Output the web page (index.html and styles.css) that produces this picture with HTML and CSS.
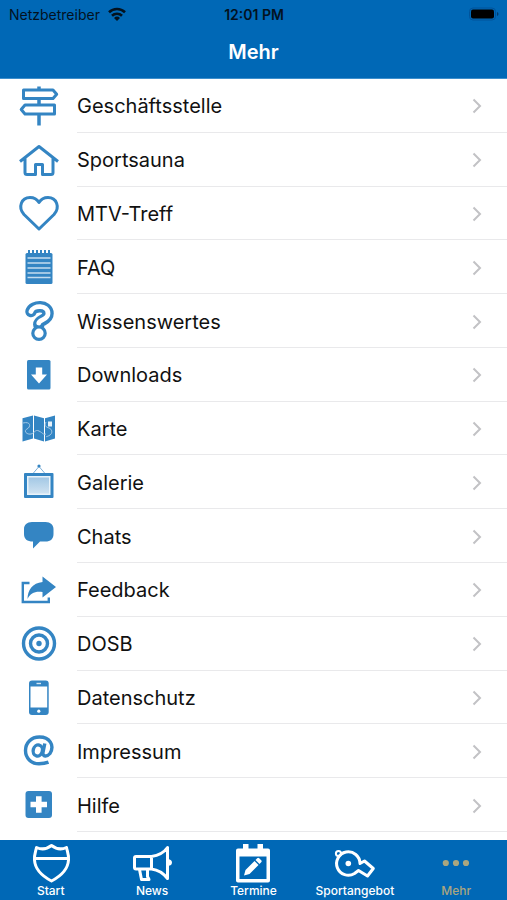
FILE: index.html
```html
<!DOCTYPE html>
<html lang="de">
<head>
<meta charset="utf-8">
<meta name="viewport" content="width=device-width, initial-scale=1">
<title>Mehr</title>
<link rel="stylesheet" href="styles.css">
</head>
<body>
<svg class="defs" aria-hidden="true">
  <symbol id="chevron" viewBox="0 0 10 16"><path d="M1.5 1.5 8 8 1.5 14.5" fill="none" stroke="currentColor" stroke-width="2"/></symbol>
  <linearGradient id="glass" x1="0" y1="0" x2="0" y2="1"><stop offset="0" stop-color="#a3c8e5"/><stop offset="1" stop-color="#cfe2f1"/></linearGradient>
</svg>
<header class="top">
  <div class="status">
    <span class="carrier">Netzbetreiber
      <svg class="wifi" viewBox="0 0 18 14" aria-hidden="true"><g fill="none" stroke="currentColor" stroke-width="2.6"><path d="M1 5.2a11.5 11.5 0 0 1 16 0"/><path d="M4 8.7a7.2 7.2 0 0 1 10 0"/></g><path d="M6 10.9a4.4 4.4 0 0 1 6 0L9 14z" fill="currentColor"/></svg>
    </span>
    <span class="time">12:01 PM</span>
    <svg class="battery" viewBox="0 0 30 14" aria-hidden="true"><rect x=".5" y="1" width="26" height="12" rx="3.5" fill="none" stroke="#00539a"/><rect x="2" y="2.500" width="23" height="9" rx="2" fill="currentColor"/><path d="M28 5v4q1.500-.5 1.500-2T28 5" fill="#003b70"/></svg>
  </div>
  <h1 class="title">Mehr</h1>
</header>
<main class="list">
  <a class="row" href="#geschaeftsstelle">
    <svg class="icon" viewBox="0 0 40 40"><g class="line"><path d="M20 .5V4M20 13v5M20 28.500v11" stroke-width="3.500"/><path d="M4.500 4H34l3.700 4.200-3.700 4.300H4.500zM35.500 19H6l-3.800 4.500L6 28h29.500z"/></g></svg>
    <span class="label">Geschäftsstelle<svg class="chev"><use href="#chevron"/></svg></span>
  </a>
  <a class="row" href="#sportsauna">
    <svg class="icon" viewBox="0 0 40 40"><g class="line"><path d="M1 21.500 20 6.500l19 15M6 18v14.500q0 2 2 2h8.500V24.500h7v10H32q2 0 2-2V18"/></g></svg>
    <span class="label">Sportsauna<svg class="chev"><use href="#chevron"/></svg></span>
  </a>
  <a class="row" href="#treff">
    <svg class="icon" viewBox="0 0 40 40"><path class="line" d="M20 36 5 21.500C-1.500 14 2.500 4.500 11 4.500c4.500 0 7.500 2.500 9 5 1.500-2.500 4.500-5 9-5 8.500 0 12.500 9.500 6 17z"/></svg>
    <span class="label">MTV-Treff<svg class="chev"><use href="#chevron"/></svg></span>
  </a>
  <a class="row" href="#faq">
    <svg class="icon" viewBox="0 0 40 40"><rect class="fill" x="6.500" y="6" width="27" height="31" rx="1.500"/><path class="line thin" d="M10 3v4M14 3v4M18 3v4M22 3v4M26 3v4M30 3v4"/><path d="M8.500 11h23M8.500 16h23M8.500 21h23M8.500 26h23M8.500 30.500h23" stroke="#c3dcef" stroke-width="1.600"/></svg>
    <span class="label">FAQ<svg class="chev"><use href="#chevron"/></svg></span>
  </a>
  <a class="row" href="#wissenswertes">
    <svg class="icon" viewBox="0 0 40 40"><g fill="none" stroke-linecap="round"><path d="M12 10.500C14 4 29 3.500 29 12.500c0 7-9.200 6-9.200 11" stroke="currentColor" stroke-width="11.500"/><circle cx="20" cy="32.200" r="6.200" fill="#fff" stroke="currentColor" stroke-width="3.200"/><path d="M12 10.500C14 4 29 3.500 29 12.500c0 6.500-8.500 6-9.200 9.500" stroke="#fff" stroke-width="4.800"/></g></svg>
    <span class="label">Wissenswertes<svg class="chev"><use href="#chevron"/></svg></span>
  </a>
  <a class="row" href="#downloads">
    <svg class="icon" viewBox="0 0 40 40"><rect class="fill" x="8" y="5" width="23.500" height="29.500" rx="1.500"/><path fill="#fff" d="M16.800 12.500h6.400v7H28l-8 9-8-9h4.800z"/></svg>
    <span class="label">Downloads<svg class="chev"><use href="#chevron"/></svg></span>
  </a>
  <a class="row" href="#karte">
    <svg class="icon" viewBox="0 0 40 40"><path class="fill" d="M3.500 9.200 14 6.500v23L3.500 32.500zM15 6.500l10 2.700v23.300l-10-3zM26 9.200l10-2.700v23L26 32.500z"/><path d="M4 14c8-2 8 4 4 6s0 6 4 5 4-5 8-3 4 4 7 3M27 13c-2 4 0 5 3 6s4 5 1 7-3 1-4 2" fill="none" stroke="#a3c8e5"/><rect x="29" y="12.500" width="4" height="5" fill="#e6f1f9"/></svg>
    <span class="label">Karte<svg class="chev"><use href="#chevron"/></svg></span>
  </a>
  <a class="row" href="#galerie">
    <svg class="icon" viewBox="0 0 40 40"><path d="M14 11.500 20 4.500l6 7" fill="none" stroke="#7fb1d9"/><circle class="fill" cx="20" cy="4" r="1.600"/><rect class="fill" x="5" y="11" width="29.500" height="25" rx="1"/><rect x="8" y="14" width="23.500" height="19" fill="#e9f3fa"/><rect x="9.500" y="15.500" width="20.500" height="16" fill="url(#glass)"/></svg>
    <span class="label">Galerie<svg class="chev"><use href="#chevron"/></svg></span>
  </a>
  <a class="row" href="#chats">
    <svg class="icon" viewBox="0 0 40 40"><path class="fill" d="M13 6h13.500c5 0 8 3 8 7v5c0 5-3 7.500-8 7.500H21L14 32.500v-7C8 25.500 5 23 5 18v-5c0-4 3-7 8-7z"/></svg>
    <span class="label">Chats<svg class="chev"><use href="#chevron"/></svg></span>
  </a>
  <a class="row" href="#feedback">
    <svg class="icon" viewBox="0 0 40 40"><path d="M10.500 13H3.800v19h26v-4.500" fill="none" stroke="currentColor" stroke-width="2.400"/><path class="fill" d="M23.500 6.500 37 17 23.500 27.500V22C16 21 11.500 23 8.500 29c0-9 5-16 15-17z"/></svg>
    <span class="label">Feedback<svg class="chev"><use href="#chevron"/></svg></span>
  </a>
  <a class="row" href="#dosb">
    <svg class="icon" viewBox="0 0 40 40"><g fill="none" stroke="currentColor" stroke-width="3.400"><circle cx="20" cy="19.500" r="15.500"/><circle cx="20" cy="19.500" r="8.500"/></g><circle class="fill" cx="20" cy="19.500" r="2.700"/></svg>
    <span class="label">DOSB<svg class="chev"><use href="#chevron"/></svg></span>
  </a>
  <a class="row" href="#datenschutz">
    <svg class="icon" viewBox="0 0 40 40"><rect class="fill" x="10" y="2.500" width="19.700" height="34.500" rx="3"/><rect x="11.500" y="8.500" width="16.700" height="21" fill="#fff"/><path d="M17.500 5.500h4.500" stroke="#d5e6f4" stroke-width="1.400"/><circle cx="19.800" cy="33.200" r="1.600" fill="#fff"/></svg>
    <span class="label">Datenschutz<svg class="chev"><use href="#chevron"/></svg></span>
  </a>
  <a class="row" href="#impressum">
    <svg class="icon" viewBox="0 0 40 40"><g fill="none" stroke="currentColor" stroke-width="3.400"><ellipse cx="18.800" cy="19.500" rx="4.600" ry="5.600" transform="rotate(15 18.800 19.500)"/><path d="M25.800 12.500 24 21.500C23.400 26 28 26 31 22.500 36 14 30.500 6 20.500 6 12 6 6.500 12 6.500 19.500S12 32.800 20 32.800c4 0 7-.6 9.500-1.600"/></g></svg>
    <span class="label">Impressum<svg class="chev"><use href="#chevron"/></svg></span>
  </a>
  <a class="row" href="#hilfe">
    <svg class="icon" viewBox="0 0 40 40"><rect class="fill" x="6.500" y="6" width="26.500" height="27" rx="3"/><path d="M11.500 19.500h16.500M19.800 11.200v16.600" stroke="#fff" stroke-width="5.600"/></svg>
    <span class="label">Hilfe<svg class="chev"><use href="#chevron"/></svg></span>
  </a>
</main>
<nav class="tabs">
  <a class="tab" href="#start">
    <svg class="tabicon" viewBox="0 0 40 40"><g class="line"><path d="M20.500 2.500C16 6 10 6.500 5.500 4.500 4.500 9 3 12 3.500 17c.5 9 7.500 16 17 21 9.500-5 16.500-12 17-21 .5-5-1-8-2-12.500-4.500 2-10.500 1.500-15-2zM4 15.500h33"/></g></svg>
    Start
  </a>
  <a class="tab" href="#news">
    <svg class="tabicon" viewBox="0 0 40 40"><g class="line"><path d="M4 13.500h15.500C27 12.500 32 9.500 35.500 4.500v31C32 31 27 27 19.500 26H4q-1.500 0-1.500-1.500V15Q2.500 13.500 4 13.500zM19.500 13.500V26M7.500 26.500l2 10h7.500l-1.500-3v-7"/></g><path class="fill" d="M36 16q4 .5 4 3.500t-4 3.500z"/></svg>
    News
  </a>
  <a class="tab" href="#termine">
    <svg class="tabicon" viewBox="0 0 40 40"><path class="fill" fill-rule="evenodd" d="M5 5.500h5V1h5.500v4.500h9V1H30v4.500h5q2 0 2 2V37.500q0 2-2 2H5q-2 0-2-2V7.500q0-2 2-2zM6.500 13.500v22.500h27v-22.500z"/><path class="fill" d="m11 32.500 1.500-5.500 9-9 4 4-9 9zM22.500 17l1.700-1.700q1-1 2 0l2 2q1 1 0 2l-1.700 1.700z"/></svg>
    Termine
  </a>
  <a class="tab" href="#sportangebot">
    <svg class="tabicon" viewBox="0 0 40 40"><g class="line"><path d="M25 20.500A11.700 11.700 0 1 0 19.500 30.500L23.500 27.500l9 5.500 5.800-7.500L29.500 18z"/><circle cx="3.500" cy="10.500" r="2.600" class="ring"/></g><circle class="fill" cx="13.300" cy="20.500" r="2.800"/></svg>
    Sportangebot
  </a>
  <a class="tab current" href="#mehr" aria-current="page">
    <svg class="tabicon" viewBox="0 0 40 40"><g class="fill"><circle cx="9.800" cy="20" r="3.100"/><circle cx="20" cy="20" r="3.100"/><circle cx="30" cy="20" r="3.100"/></g></svg>
    Mehr
  </a>
</nav>
</body>
</html>
```
FILE: styles.css
```css
* { box-sizing: border-box; }

body {
  margin: 0;
  min-height: 100vh;
  display: flex;
  flex-direction: column;
  background: #fff;
  color: #111;
  font-family: Inter, "Liberation Sans", sans-serif;
}

a { color: inherit; text-decoration: none; }

.defs { position: absolute; width: 0; height: 0; }

.top {
  background: #0068b6;
  border-bottom: 1px solid #3d8fcd;
}

.status {
  display: grid;
  grid-template-columns: 1fr auto 1fr;
  align-items: center;
  height: 28px;
  padding: 0 8px 0 9px;
  color: #03121f;
  font-size: 14px;
}

.carrier { display: flex; align-items: center; gap: 8px; }
.wifi { width: 18px; height: 14px; }
.time { font-weight: 600; }
.battery { width: 30px; height: 14px; justify-self: end; color: #000; }

.title {
  margin: 0;
  padding: 8px 0 10px;
  color: #fff;
  font-size: 20px;
  line-height: 32px;
  font-weight: 600;
  text-align: center;
}

.list {
  flex: 1;
  display: grid;
  grid-auto-rows: minmax(44px, 1fr);
  padding-bottom: 8px;
}

.row {
  display: flex;
  align-items: center;
  gap: 18px;
  padding-left: 19px;
}

.icon {
  flex: none;
  width: 40px;
  height: 40px;
  overflow: visible;
  color: #3485c3;
}

.line {
  fill: none;
  stroke: currentColor;
  stroke-width: 3px;
  stroke-linejoin: round;
}

.thin { stroke-width: 2px; }
.ring { stroke-width: 2px; }
.fill { fill: currentColor; }

.label {
  flex: 1;
  align-self: stretch;
  display: flex;
  align-items: center;
  justify-content: space-between;
  padding-top: 2px;
  padding-right: 25px;
  border-bottom: 1px solid #e9e9eb;
  font-size: 20px;
}

.chev { width: 10px; height: 16px; color: #c2c2c5; }

.tabs {
  display: grid;
  grid-template-columns: repeat(5, 1fr);
  height: 60px;
  background: #0068b6;
  color: #fff;
}

.tab {
  display: flex;
  flex-direction: column;
  align-items: center;
  padding-top: 3px;
  font-size: 12px;
  line-height: 16px;
  font-weight: 500;
}

.tabicon { width: 40px; height: 40px; overflow: visible; }
.current { color: #aaa67f; }
```
